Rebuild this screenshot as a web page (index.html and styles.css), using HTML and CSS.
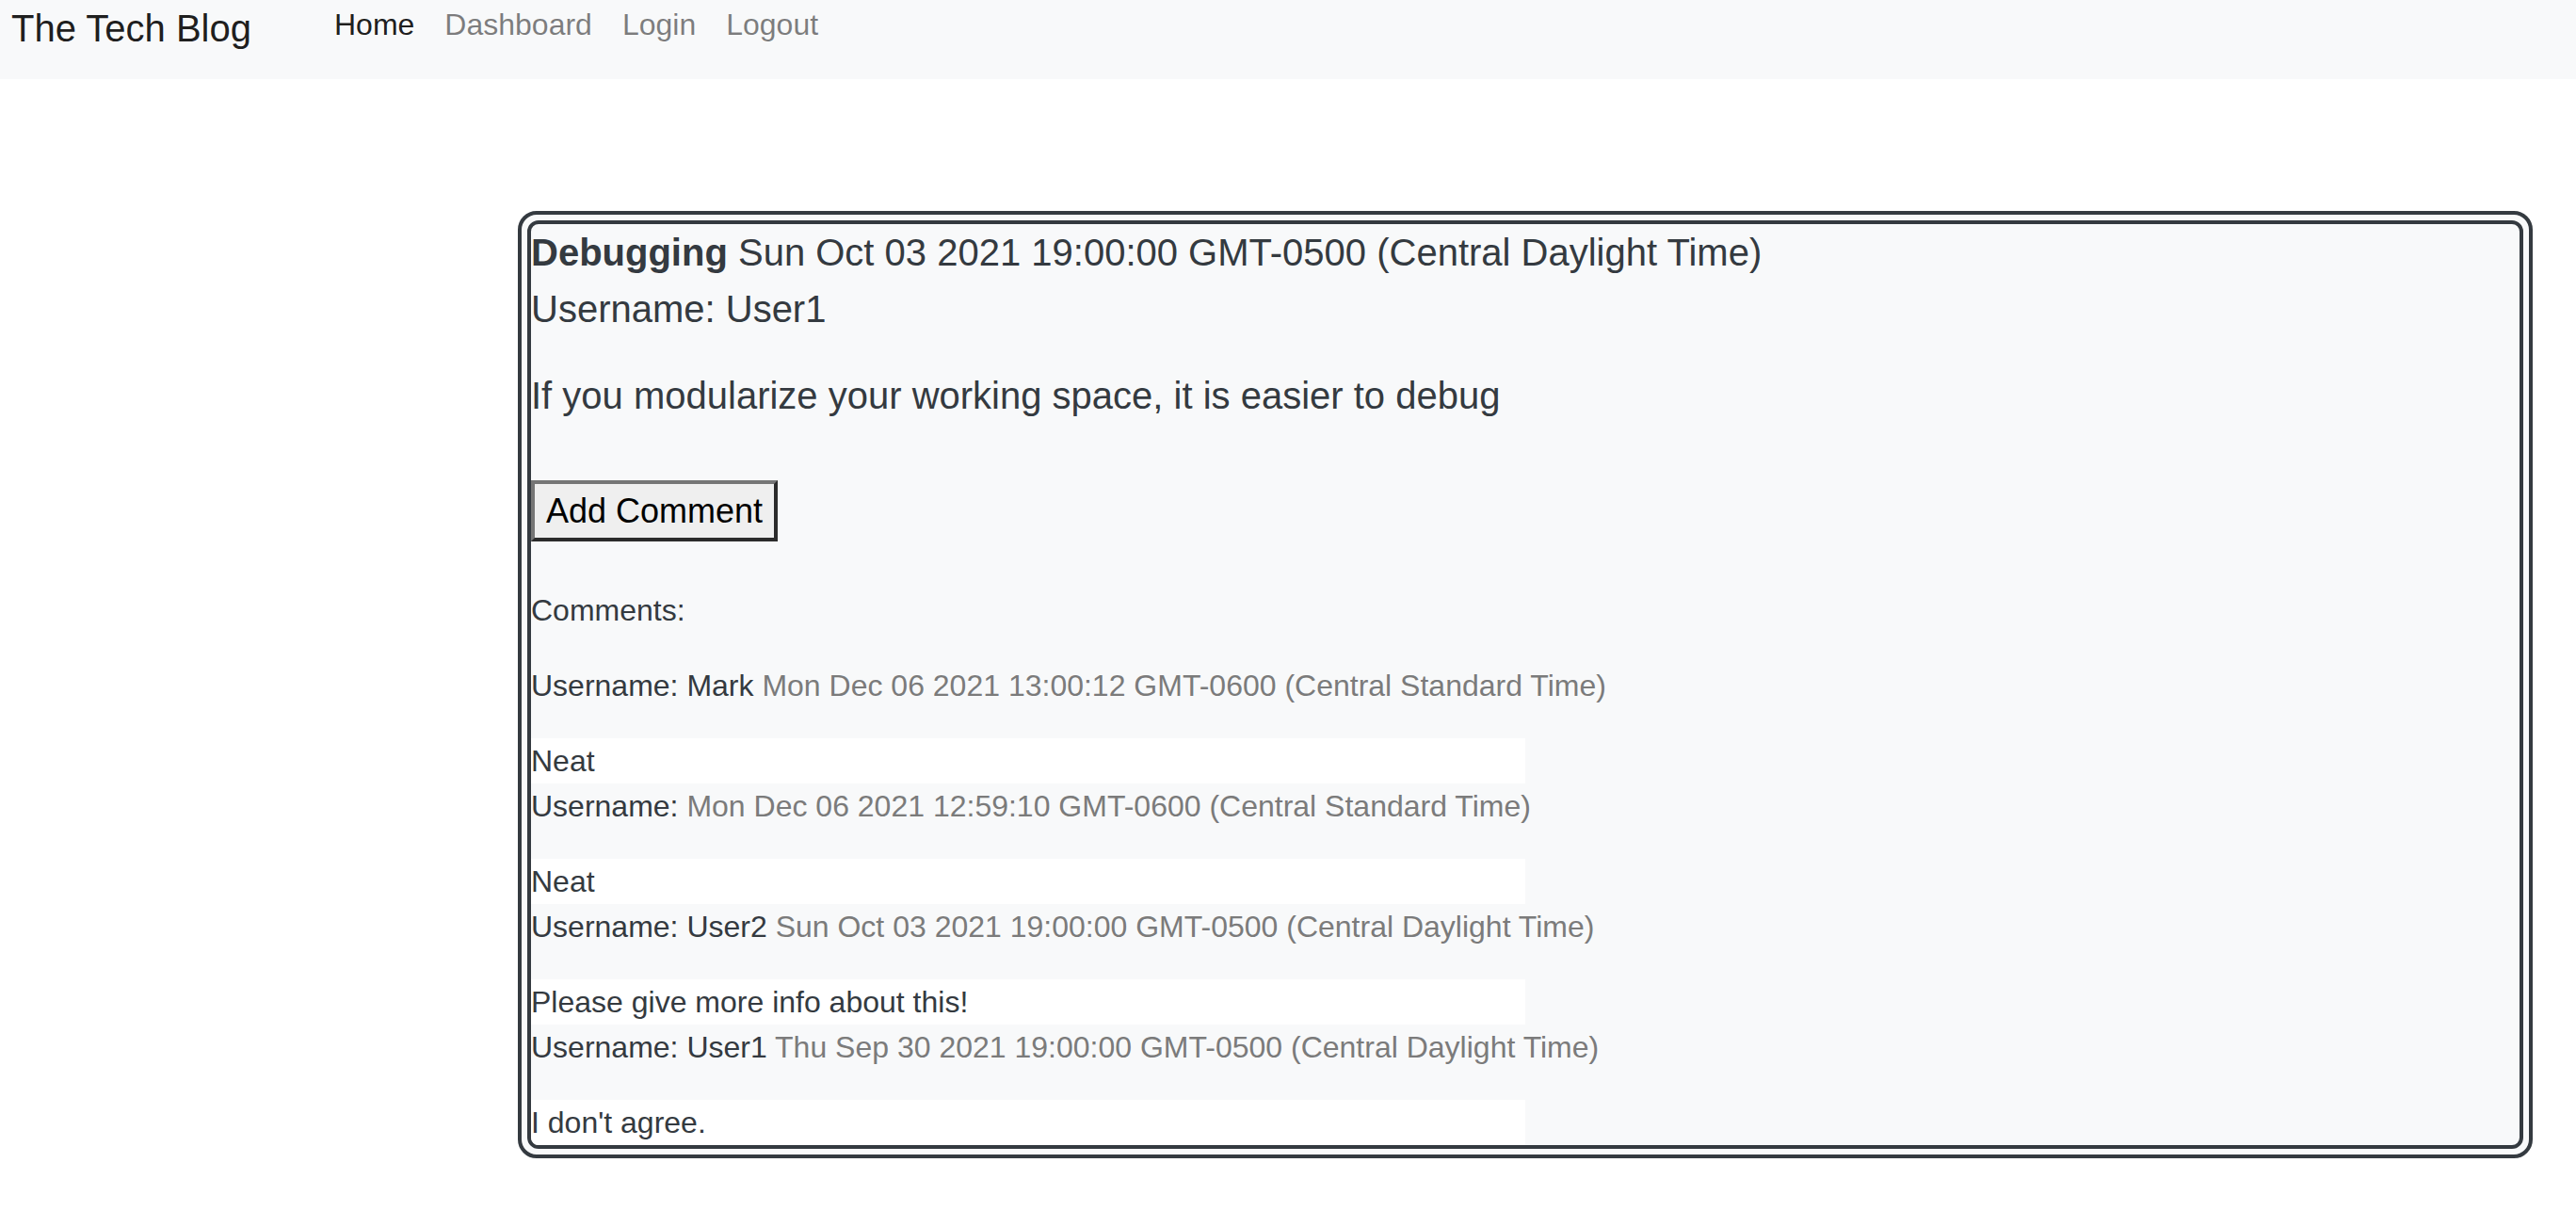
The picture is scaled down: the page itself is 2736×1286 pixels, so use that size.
FILE: index.html
```html
<!DOCTYPE html>
<html lang="en">
<head>
<meta charset="utf-8">
<title>The Tech Blog</title>
<link rel="stylesheet" href="styles.css">
</head>
<body>
<nav class="navbar">
  <a class="brand" href="#">The Tech Blog</a>
  <ul class="nav">
    <li><a class="nav-link active" href="#">Home</a></li>
    <li><a class="nav-link" href="#">Dashboard</a></li>
    <li><a class="nav-link" href="#">Login</a></li>
    <li><a class="nav-link" href="#">Logout</a></li>
  </ul>
</nav>
<main class="main">
  <div class="card">
    <div class="card-inner">
      <div class="post-head">
        <div class="post-title"><strong>Debugging</strong> Sun Oct 03 2021 19:00:00 GMT-0500 (Central Daylight Time)</div>
        <div class="post-user">Username: User1</div>
      </div>
      <p class="post-body">If you modularize your working space, it is easier to debug</p>
      <button class="btn" type="button">Add Comment</button>
      <p class="comments-label">Comments:</p>
      <div class="comment">
        <p class="comment-meta">Username: Mark <span class="muted">Mon Dec 06 2021 13:00:12 GMT-0600 (Central Standard Time)</span></p>
        <div class="comment-text">Neat</div>
      </div>
      <div class="comment">
        <p class="comment-meta">Username: <span class="muted">Mon Dec 06 2021 12:59:10 GMT-0600 (Central Standard Time)</span></p>
        <div class="comment-text">Neat</div>
      </div>
      <div class="comment">
        <p class="comment-meta">Username: User2 <span class="muted">Sun Oct 03 2021 19:00:00 GMT-0500 (Central Daylight Time)</span></p>
        <div class="comment-text">Please give more info about this!</div>
      </div>
      <div class="comment">
        <p class="comment-meta">Username: User1 <span class="muted">Thu Sep 30 2021 19:00:00 GMT-0500 (Central Daylight Time)</span></p>
        <div class="comment-text">I don't agree.</div>
      </div>
    </div>
  </div>
</main>
</body>
</html>
```

FILE: styles.css
```css
* {
  box-sizing: border-box;
}

body {
  margin: 0;
  font-family: "Liberation Sans", Arial, Helvetica, sans-serif;
  color: #212529;
  background: #ffffff;
}

.navbar {
  display: flex;
  align-items: flex-start;
  height: 84px;
  padding-left: 12px;
  background: #f8f9fa;
}

.brand {
  font-size: 40px;
  line-height: 60px;
  color: rgba(0, 0, 0, 0.9);
  text-decoration: none;
  margin-right: 72px;
  white-space: nowrap;
}

.nav {
  display: flex;
  list-style: none;
  margin: 2px 0 0;
  padding: 0;
}

.nav-link {
  display: block;
  padding: 0 16px;
  font-size: 32px;
  line-height: 48px;
  color: rgba(0, 0, 0, 0.5);
  text-decoration: none;
}

.nav-link.active {
  color: rgba(0, 0, 0, 0.9);
}

.main {
  padding: 140px 46px 40px 550px;
}

.card {
  border: 4px solid #343a40;
  border-radius: 20px;
  padding: 6px;
  background: #f8f9fa;
}

.card-inner {
  border: 4px solid #343a40;
  border-radius: 12px;
  background: #f8f9fa;
  color: #343a40;
  overflow: hidden;
}

.post-title,
.post-user {
  font-size: 40px;
  line-height: 60px;
}

.post-body {
  margin: 32px 0 0;
  font-size: 40px;
  line-height: 60px;
}

.btn {
  display: block;
  margin-top: 60px;
  padding: 8px 12px;
  font-family: "Liberation Sans", Arial, Helvetica, sans-serif;
  font-size: 36px;
  line-height: 41px;
  color: #000000;
  background: #efefef;
  border-width: 4px;
  border-style: solid;
  border-color: #767676 #2b2b2b #2b2b2b #767676;
  border-radius: 0;
}

.comments-label {
  margin: 49px 0 32px;
  font-size: 32px;
  line-height: 48px;
}

.comment-meta {
  margin: 0 0 32px;
  font-size: 32px;
  line-height: 48px;
}

.muted {
  color: #7b7b7b;
}

.comment-text {
  width: 50%;
  background: #ffffff;
  font-size: 32px;
  line-height: 48px;
}
```
